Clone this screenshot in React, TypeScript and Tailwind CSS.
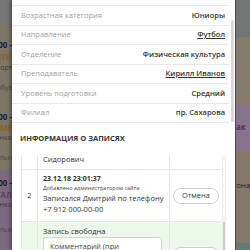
import React from 'react';

const font = { fontFamily: '"Open Sans", "Noto Sans", sans-serif' };

const details = [
  { label: 'Возрастная категория', value: 'Юниоры', link: false },
  { label: 'Направление', value: 'Футбол', link: true },
  { label: 'Отделение', value: 'Физическая культура', link: false },
  { label: 'Преподаватель', value: 'Кирилл Иванов', link: true },
  { label: 'Уровень подготовки', value: 'Средний', link: false },
  { label: 'Филиал', value: 'пр. Сахарова', link: false },
];

function StripLine({ text, className }: { text: string; className: string }) {
  return (
    <div className={`flex justify-end whitespace-nowrap overflow-hidden ${className}`}>
      <span>{text}</span>
    </div>
  );
}

function LeftStrip() {
  return (
    <div className="w-[12px] h-[250px] flex flex-col overflow-hidden text-[8px] leading-[10px]">
      <div className="h-[25px] bg-[#767676]" />
      <div className="h-[145px] bg-[#7e7567] flex flex-col pt-[15px]">
        <StripLine text="10.00 -" className="font-bold text-[#1e1e1e]" />
        <StripLine text="ЛИТН" className="font-bold text-[#8a6424] mt-[2px]" />
        <StripLine text="Спорт" className="text-[#3e3e3e] text-[7px] mt-[1px]" />
        <StripLine text="Рыбуз" className="text-[#4a4a4a] text-[7px] mt-[10px]" />
        <StripLine text="12.00 -" className="font-bold text-[#1e1e1e] mt-[19px]" />
        <StripLine text="ЗЕМЕ" className="font-bold text-[#8a6424] mt-[1px]" />
        <StripLine text="Линко" className="text-[#3e3e3e] text-[7px]" />
        <StripLine text="Начальн" className="text-[#4a4a4a] text-[7px] mt-[10px]" />
      </div>
      <div className="flex-1 bg-[#7c6b80] flex flex-col pt-[8px]">
        <StripLine text="14.00 -" className="font-bold text-[#1e1e1e]" />
        <StripLine text="ГАЛ" className="font-bold text-[#6a3a6a] mt-[2px]" />
        <StripLine text="Линко" className="text-[#3e3e3e] text-[7px]" />
        <StripLine text="Начальн" className="text-[#4a4a4a] text-[7px] mt-[15px]" />
      </div>
    </div>
  );
}

function RightStrip() {
  return (
    <div className="w-[15px] h-[250px] flex flex-col overflow-hidden text-[8px] leading-[10px] border-l border-[#4e4e4e]">
      <div className="h-[37px] bg-[#747575]" />
      <div className="h-[68px] bg-[#857a6b]" />
      <div className="h-[45px] bg-[#87728d] pt-[17px] whitespace-nowrap">
        <span className="font-bold text-[#5a2d63]">ак</span>
      </div>
      <div className="h-[93px] bg-[#837869] pt-[30px] whitespace-nowrap">
        <span className="text-[#222]">она</span>
      </div>
      <div className="flex-1 bg-[#5f7c7a]" />
    </div>
  );
}

function Button({ children }: { children: React.ReactNode }) {
  return (
    <div className="w-[46px] h-[16px] rounded-full border border-[#cfcfcf] bg-white flex items-center justify-center text-[7.5px] text-[#333]">
      {children}
    </div>
  );
}

export default function App() {
  return (
    <div className="relative w-[250px] h-[250px] overflow-hidden bg-[#777]" style={font}>
      <div className="flex h-[250px]">
        <LeftStrip />
        <div className="flex-1" />
        <RightStrip />
      </div>

      <div className="absolute left-[12px] top-0 w-[223px] h-[250px] bg-white flex shadow-[-2px_0_3px_rgba(0,0,0,0.35)]">
        <div className="flex-1 min-w-0 flex flex-col">
          <div className="h-[5px] shrink-0" />
          {details.map((d) => (
            <div
              key={d.label}
              className="h-[19.5px] shrink-0 border-t border-[#e9e9e9] flex items-center justify-between pl-[9px] pr-[4px] text-[7.5px]"
            >
              <span className="text-[#a0a0a0]">{d.label}</span>
              <span className={`font-semibold text-[#333] ${d.link ? 'underline' : ''}`}>{d.value}</span>
            </div>
          ))}
          <div className="border-t border-[#e9e9e9] h-[33px] shrink-0 pl-[8px] pt-[10px] text-[7.5px] leading-[10px]">
            <span className="font-bold text-[#333]">ИНФОРМАЦИЯ О ЗАПИСЯХ</span>
          </div>

          <div className="flex-1 min-h-0 overflow-hidden flex ml-[9px] mr-[3px]">
            <div className="flex-1 min-w-0 flex flex-col border-l border-[#e6e6e6] text-[#333]">
              <div className="h-[14px] shrink-0 flex">
                <div className="w-[16px] border-r border-[#e6e6e6]" />
                <div className="w-[131px] pl-[5px] text-[7.5px] leading-[9px]">Сидорович</div>
                <div className="flex-1 border-l border-[#e6e6e6]" />
              </div>
              <div className="h-[52px] shrink-0 flex border-t border-[#e6e6e6]">
                <div className="w-[16px] border-r border-[#e6e6e6] flex items-center justify-center text-[7.5px]">2</div>
                <div className="w-[131px] pl-[5px] pt-[4px] flex flex-col">
                  <span className="font-bold text-[7px] leading-[10px]">23.12.18 23:01:37</span>
                  <span className="text-[5.5px] leading-[9px] text-[#444]">Добавлено администратором сайта</span>
                  <span className="text-[7.5px] leading-[11px] whitespace-nowrap">Записался Дмитрий по телефону</span>
                  <span className="text-[7.5px] leading-[10px]">+7 912 000-00-00</span>
                </div>
                <div className="flex-1 border-l border-[#e6e6e6] flex items-center justify-center">
                  <Button>Отмена</Button>
                </div>
              </div>
              <div className="flex-1 flex border-t border-[#e6e6e6] bg-[#ebf8ea]">
                <div className="w-[16px] border-r border-[#e6e6e6]" />
                <div className="w-[131px] pl-[5px] pt-[4px] flex flex-col">
                  <span className="text-[7.5px] leading-[10px]">Запись свободна</span>
                  <div className="mt-[1px] w-[119px] h-[40px] bg-white border border-[#d5d5d5] rounded-[3px] px-[6px] pt-[3px] text-[7.5px] leading-[10px] text-[#444]">
                    Комментарий (при необходимости)
                  </div>
                </div>
                <div className="flex-1 border-l border-[#e6e6e6] flex justify-center pt-[25px]">
                  <Button>Записать</Button>
                </div>
              </div>
            </div>
            <div className="w-[4px] flex flex-col border-l border-r border-[#ececec] bg-[#f7f7f7]">
              <div className="h-[67px]" />
              <div className="flex-1 bg-[#cdcdcd]" />
            </div>
          </div>
        </div>
        <div className="w-[6px] pt-[20px] pl-[2px]">
          <div className="w-[3px] h-[102px] bg-[#d9d9d9] rounded-full" />
        </div>
      </div>
    </div>
  );
}
